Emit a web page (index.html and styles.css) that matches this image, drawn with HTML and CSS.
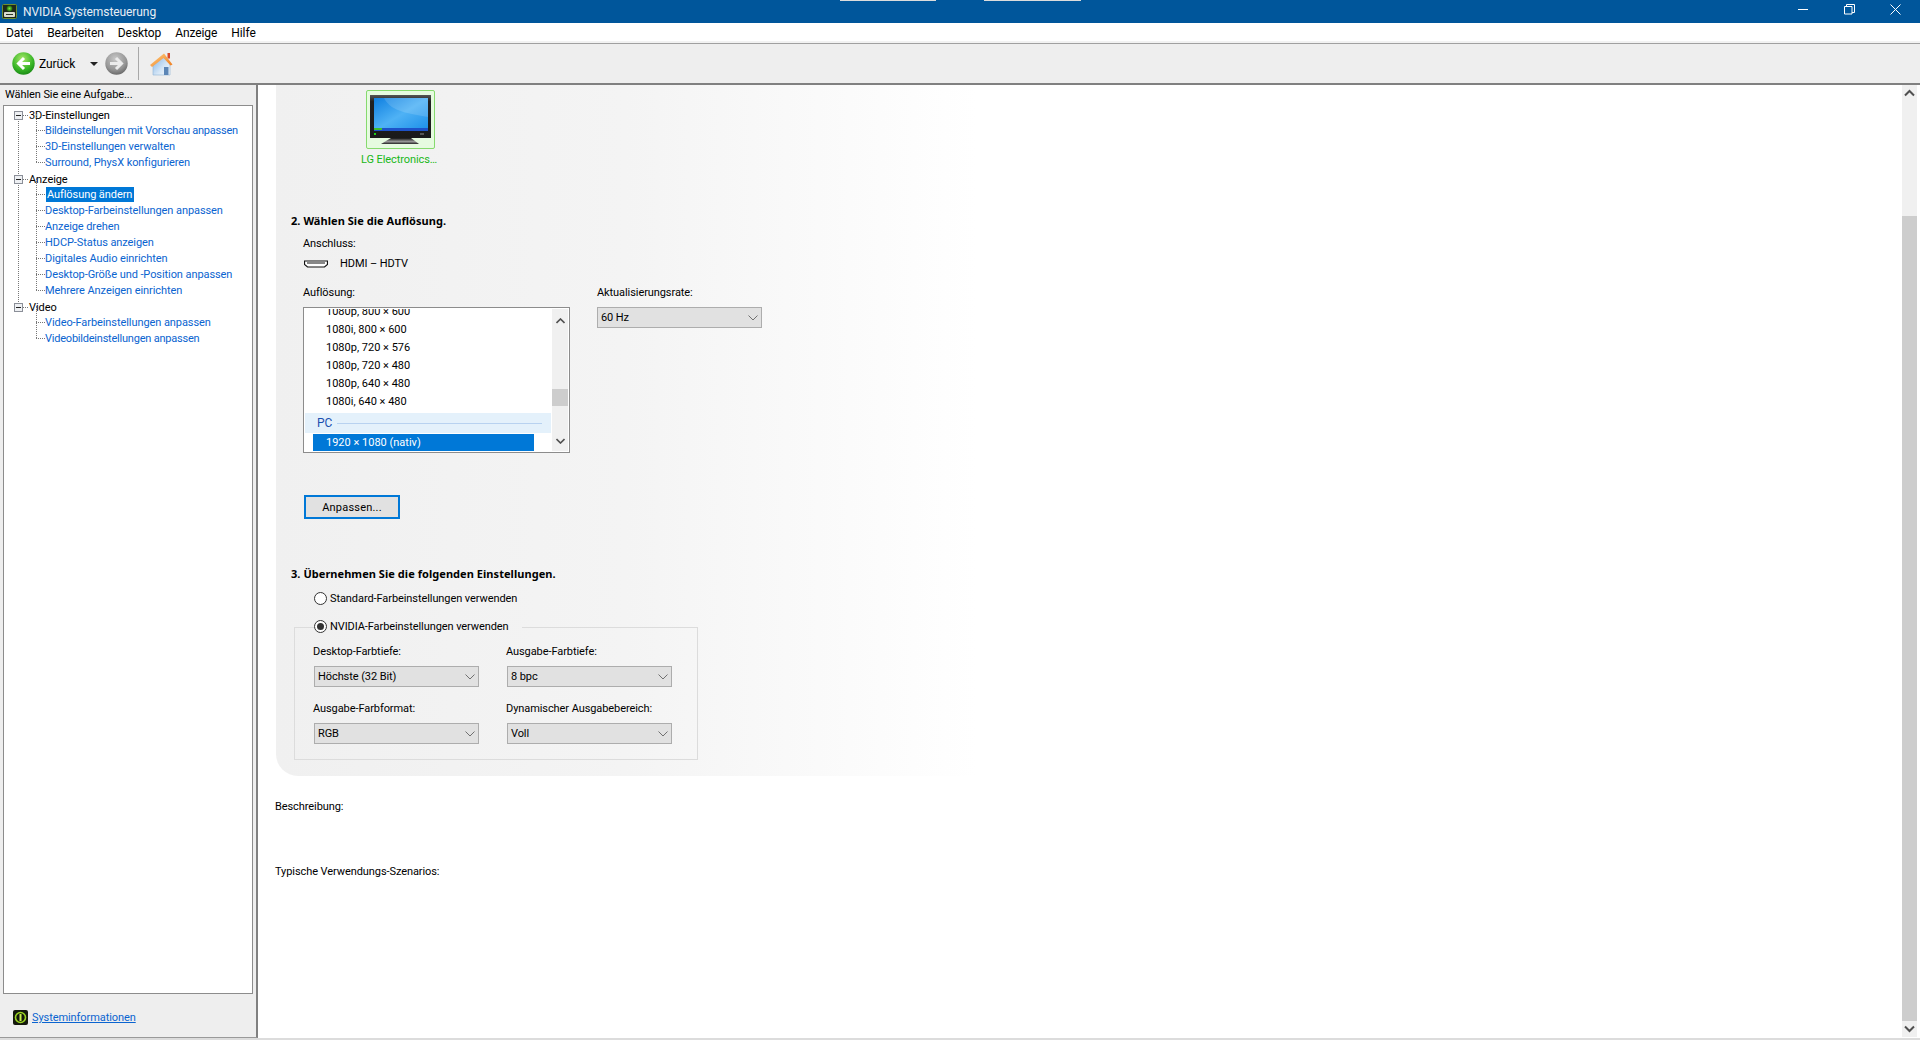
FILE: index.html
```html
<!DOCTYPE html>
<html lang="de">
<head>
<meta charset="utf-8">
<title>NVIDIA Systemsteuerung</title>
<link rel="stylesheet" href="styles.css">
</head>
<body>
<div class="window">
  <header class="titlebar">
    <svg class="app-icon" width="16" height="16" viewBox="0 0 16 16"><defs><radialGradient id="ag" cx=".5" cy=".5" r=".5"><stop offset="0" stop-color="#7cf03a"/><stop offset="1" stop-color="#1a5a10"/></radialGradient></defs><rect x="1.500" y="1.500" width="14" height="14" rx="1" fill="#20281a" stroke="#6f8f30"/><circle cx="8.500" cy="5.500" r="3" fill="url(#ag)"/><rect x="3" y="9" width="11" height="5" rx="1" fill="#d8dcd0"/><rect x="5" y="11" width="7" height="1" fill="#30382a"/></svg>
    <span class="title-text">NVIDIA Systemsteuerung</span>
    <div class="title-strips"><i class="strip strip-a"></i><i class="strip strip-b"></i></div>
    <div class="win-controls">
      <svg class="win-min" width="11" height="11" viewBox="0 0 11 11"><path d="M0 5.5H10" stroke="#fff" fill="none"/></svg>
      <svg class="win-max" width="11" height="11" viewBox="0 0 11 11"><path d="M.5 2.5h7.5v7.5H.5zM2.5 2.5V.5h8v8H8" stroke="#fff" fill="none"/></svg>
      <svg class="win-close" width="11" height="11" viewBox="0 0 11 11"><path d="M.5.5l10 10M10.500.5l-10 10" stroke="#fff" fill="none"/></svg>
    </div>
  </header>
  <nav class="menubar">
    <span class="menu-item">Datei</span><span class="menu-item">Bearbeiten</span><span class="menu-item">Desktop</span><span class="menu-item">Anzeige</span><span class="menu-item">Hilfe</span>
  </nav>
  <div class="toolbar">
    <svg class="tool-back" width="23" height="23" viewBox="0 0 23 23"><defs><radialGradient id="gb" cx=".45" cy=".3" r=".8"><stop offset="0" stop-color="#a8e86a"/><stop offset=".6" stop-color="#38b526"/><stop offset="1" stop-color="#0f7a10"/></radialGradient></defs><circle cx="11.500" cy="11.500" r="11.200" fill="url(#gb)"/><path d="M18 11.500H7M12 6l-5.500 5.500L12 17" fill="none" stroke="#fff" stroke-width="3"/></svg>
    <span class="back-label">Zurück</span>
    <i class="drop-caret"></i>
    <svg class="tool-forward" width="23" height="23" viewBox="0 0 23 23"><defs><radialGradient id="gf" cx=".45" cy=".3" r=".8"><stop offset="0" stop-color="#c8c8c8"/><stop offset=".6" stop-color="#969696"/><stop offset="1" stop-color="#585858"/></radialGradient></defs><circle cx="11.500" cy="11.500" r="11.200" fill="url(#gf)"/><path d="M5 11.500h11M11 6l5.500 5.500L11 17" fill="none" stroke="#ececec" stroke-width="3"/></svg>
    <i class="tool-sep"></i>
    <svg class="tool-home" width="25" height="24" viewBox="0 0 25 24"><defs><linearGradient id="hw" x1="0" y1="0" x2="1" y2="1"><stop offset="0" stop-color="#7fb2e6"/><stop offset=".6" stop-color="#d5e6f6"/><stop offset="1" stop-color="#f4f8fc"/></linearGradient><linearGradient id="hr" x1="0" y1="0" x2="1" y2="1"><stop offset="0" stop-color="#ffd083"/><stop offset="1" stop-color="#ee7a1c"/></linearGradient></defs><path d="M4 12L15 4l6 8v11H4z" fill="url(#hw)" stroke="#8fb4d4" stroke-width=".6"/><path d="M15 15h4.500v8H15z" fill="#5c86b6"/><path d="M18.500 1h2.500v5.500h-2.500z" fill="#d84a2a"/><path d="M1 13L15 1.500 23.500 12.500 21.500 13.500 14.500 6 3 15z" fill="url(#hr)"/></svg>
  </div>
  <div class="main">
    <aside class="sidebar">
      <div class="side-title">Wählen Sie eine Aufgabe...</div>
      <div class="tree">
        <ul class="tree-root">
          <li class="group">
            <div class="row parent"><i class="expander"></i>3D-Einstellungen</div>
            <ul class="children">
              <li class="row child tight">Bildeinstellungen mit Vorschau anpassen</li>
              <li class="row child">3D-Einstellungen verwalten</li>
              <li class="row child">Surround, PhysX konfigurieren</li>
            </ul>
          </li>
          <li class="group">
            <div class="row parent"><i class="expander"></i>Anzeige</div>
            <ul class="children">
              <li class="row child"><span class="selected-task">Auflösung ändern</span></li>
              <li class="row child">Desktop-Farbeinstellungen anpassen</li>
              <li class="row child">Anzeige drehen</li>
              <li class="row child">HDCP-Status anzeigen</li>
              <li class="row child">Digitales Audio einrichten</li>
              <li class="row child">Desktop-Größe und -Position anpassen</li>
              <li class="row child">Mehrere Anzeigen einrichten</li>
            </ul>
          </li>
          <li class="group last">
            <div class="row parent"><i class="expander"></i>Video</div>
            <ul class="children">
              <li class="row child">Video-Farbeinstellungen anpassen</li>
              <li class="row child tight">Videobildeinstellungen anpassen</li>
            </ul>
          </li>
        </ul>
      </div>
      <div class="side-foot">
        <svg width="15" height="15" viewBox="0 0 15 15"><rect width="15" height="15" rx="2" fill="#14180c"/><circle cx="7.500" cy="7.500" r="5" fill="none" stroke="#9ad422" stroke-width="1.600"/><path d="M7.500 4v7" stroke="#c8f04a" stroke-width="2"/></svg>
        <a class="sys-link">Systeminformationen</a>
      </div>
    </aside>
    <main class="content">
      <section class="panel">
        <div class="display-pick">
          <div class="tile">
            <svg width="61" height="50" viewBox="0 0 61 50"><defs><linearGradient id="scr" x1="0" y1="0" x2="1" y2="1"><stop offset="0" stop-color="#0f7fe0"/><stop offset=".5" stop-color="#4fb2f5"/><stop offset="1" stop-color="#1a8ee8"/></linearGradient><linearGradient id="st" x1="0" y1="0" x2="0" y2="1"><stop offset="0" stop-color="#111"/><stop offset=".6" stop-color="#999"/><stop offset="1" stop-color="#222"/></linearGradient><linearGradient id="fr" x1="0" y1="0" x2="0" y2="1"><stop offset="0" stop-color="#555"/><stop offset=".15" stop-color="#222"/><stop offset="1" stop-color="#1a1a1a"/></linearGradient></defs><rect x="0" y="0" width="61" height="43" fill="url(#fr)"/><rect x="4" y="3" width="54" height="33" fill="url(#scr)"/><path d="M14 3c6 12 20 15 44 19V3z" fill="#fff" opacity=".14"/><rect x="4" y="33" width="54" height="3" fill="#1d52c8"/><rect x="4" y="33" width="8" height="2" fill="#3fbf30"/><rect x="4" y="38" width="2" height="2" fill="#1fd018"/><rect x="50" y="38" width="4" height="2" fill="#555"/><path d="M21 43h20l8 6H11z" fill="url(#st)"/></svg>
          </div>
          <div class="tile-label">LG Electronics…</div>
        </div>

        <h2 class="heading h-res">2. Wählen Sie die Auflösung.</h2>
        <div class="indented">
          <div class="txt conn-label">Anschluss:</div>
          <div class="conn-row">
            <svg width="24" height="9" viewBox="0 0 24 9"><path d="M.500 1h23v3.500l-3 2.500H3.500l-3-2.500z" fill="#fff" stroke="#111" stroke-width="1.200"/><path d="M3 3h18" stroke="#111" stroke-width="1"/></svg>
            <span class="txt">HDMI – HDTV</span>
          </div>
          <div class="res-row">
            <div>
              <div class="txt">Auflösung:</div>
              <div class="listbox">
                <div class="list-body">
                  <div class="list-scroll">
                    <div class="opt">1080p, 800 × 600</div>
                    <div class="opt">1080i, 800 × 600</div>
                    <div class="opt">1080p, 720 × 576</div>
                    <div class="opt">1080p, 720 × 480</div>
                    <div class="opt">1080p, 640 × 480</div>
                    <div class="opt">1080i, 640 × 480</div>
                    <div class="opt-group"><span>PC</span><i></i></div>
                    <div class="opt active">1920 × 1080 (nativ)</div>
                  </div>
                </div>
                <div class="list-bar">
                  <svg width="9" height="6" viewBox="0 0 9 6"><path d="M.500 5L4.500 1l4 4" fill="none" stroke="#505050" stroke-width="1.600"/></svg>
                  <i class="list-thumb"></i>
                  <svg width="9" height="6" viewBox="0 0 9 6"><path d="M.500 1l4 4 4-4" fill="none" stroke="#505050" stroke-width="1.600"/></svg>
                </div>
              </div>
            </div>
            <div>
              <div class="txt">Aktualisierungsrate:</div>
              <div class="combo combo-first"><span>60 Hz</span><svg width="10" height="6" viewBox="0 0 10 6"><path d="M.500.500l4.500 4.500 4.500-4.500" fill="none" stroke="#707070"/></svg></div>
            </div>
          </div>
          <button class="btn" type="button">Anpassen...</button>
        </div>

        <h2 class="heading h-apply">3. Übernehmen Sie die folgenden Einstellungen.</h2>
        <div class="radio-row"><i class="radio"></i><span class="txt">Standard-Farbeinstellungen verwenden</span></div>
        <fieldset class="color-group">
          <legend class="radio-legend"><i class="radio on"></i><span class="txt">NVIDIA-Farbeinstellungen verwenden</span></legend>
          <div class="color-grid">
            <div>
              <div class="txt">Desktop-Farbtiefe:</div>
              <div class="combo"><span>Höchste (32 Bit)</span><svg width="10" height="6" viewBox="0 0 10 6"><path d="M.500.500l4.500 4.500 4.500-4.500" fill="none" stroke="#707070"/></svg></div>
            </div>
            <div>
              <div class="txt">Ausgabe-Farbtiefe:</div>
              <div class="combo"><span>8 bpc</span><svg width="10" height="6" viewBox="0 0 10 6"><path d="M.500.500l4.500 4.500 4.500-4.500" fill="none" stroke="#707070"/></svg></div>
            </div>
            <div>
              <div class="txt">Ausgabe-Farbformat:</div>
              <div class="combo"><span>RGB</span><svg width="10" height="6" viewBox="0 0 10 6"><path d="M.500.500l4.500 4.500 4.500-4.500" fill="none" stroke="#707070"/></svg></div>
            </div>
            <div>
              <div class="txt">Dynamischer Ausgabebereich:</div>
              <div class="combo"><span>Voll</span><svg width="10" height="6" viewBox="0 0 10 6"><path d="M.500.500l4.500 4.500 4.500-4.500" fill="none" stroke="#707070"/></svg></div>
            </div>
          </div>
        </fieldset>
      </section>
      <div class="txt desc">Beschreibung:</div>
      <div class="txt usage">Typische Verwendungs-Szenarios:</div>
    </main>
    <div class="vscroll">
      <div class="vs-btn"><svg width="11" height="8" viewBox="0 0 11 8"><path d="M1 6.500l4.500-4.500 4.500 4.500" fill="none" stroke="#505050" stroke-width="2"/></svg></div>
      <div class="vs-track"><i class="vs-thumb"></i></div>
      <div class="vs-btn"><svg width="11" height="8" viewBox="0 0 11 8"><path d="M1 1.500l4.500 4.500 4.500-4.500" fill="none" stroke="#505050" stroke-width="2"/></svg></div>
    </div>
  </div>
</div>
</body>
</html>
```

FILE: styles.css
```css
* { box-sizing: border-box; }
html, body { margin: 0; height: 100%; overflow: hidden; }
body { font-family: Roboto, "Liberation Sans", sans-serif; font-size: 11px; color: #000; background: #fff; white-space: nowrap; letter-spacing: -0.08px; }
ul { list-style: none; margin: 0; padding: 0; }
i { display: block; }

.window { display: flex; flex-direction: column; height: 1040px; }

.titlebar { height: 23px; background: #00569b; color: #e8eef5; display: flex; align-items: center; padding-left: 1px; font-size: 12px; flex: none; }
.app-icon { flex: none; margin-top: -2px; }
.title-text { margin-left: 6px; width: 817px; flex: none; }
.title-strips { display: flex; align-self: flex-start; flex: none; }
.strip { height: 1px; width: 96px; background: #dcdcdc; }
.strip-b { margin-left: 48px; width: 97px; }
.win-controls { margin-left: auto; display: flex; align-items: center; padding-right: 19px; margin-top: -4px; gap: 35px; }

.menubar { height: 20px; background: #fff; border-bottom: 2px solid #f2f2f2; display: flex; align-items: center; padding: 2px 0 0 6px; font-size: 12px; gap: 14px; flex: none; }

.toolbar { height: 42px; flex: none; background: #eeeeee; border-top: 1px solid #a0a0a0; display: flex; align-items: center; padding-left: 12px; border-bottom: 2px solid #808080; }
.back-label { margin-left: 4px; font-size: 12px; width: 46px; }
.drop-caret { width: 0; height: 0; border: 4px solid transparent; border-top-color: #222; border-bottom: 0; margin-left: 5px; }
.tool-forward { margin-left: 7px; }
.tool-sep { width: 1px; height: 33px; background: #a8a8a8; margin-left: 10px; }
.tool-home { margin-left: 10px; }

.main { flex: 1; display: flex; min-height: 0; border-bottom: 2px solid #dcdcdc; }

.sidebar { width: 258px; flex: none; background: #eeeeee; border-right: 2px solid #808080; border-bottom: 1px solid #999; display: flex; flex-direction: column; padding: 0 3px; }
.side-title { height: 20px; line-height: 20px; padding-left: 2px; }
.tree { flex: 1; background: #fff; border: 1px solid #8c8c8c; width: 250px; padding-top: 1px; padding-left: 9px; }
.row { height: 16px; line-height: 18px; white-space: nowrap; }
.group { position: relative; }
.group::before { content: ""; position: absolute; left: 5px; top: 8px; bottom: -8px; border-left: 1px dotted #777; }
.group.last::before { display: none; }
.parent { display: flex; align-items: center; position: relative; padding: 2px 0 0 16px; }
.parent::before { content: ""; position: absolute; left: 10px; top: 8px; width: 5px; border-top: 1px dotted #777; }
.expander { position: absolute; left: 1px; top: 4px; width: 9px; height: 9px; background: #eef0f3; border: 1px solid #8b8f98; z-index: 1; }
.expander::after { content: ""; display: block; margin: 3px 1px 0; height: 1px; background: #222; }
.children { margin: -1px 0 1px 23px; }
.child { color: #0a64d0; position: relative; padding-left: 9px; }
.child.tight { letter-spacing: -0.22px; }
.child::before { content: ""; position: absolute; left: 0; top: -8px; height: 16px; border-left: 1px dotted #777; }
.child::after { content: ""; position: absolute; left: 0; top: 8px; width: 9px; border-top: 1px dotted #777; }
.selected-task { background: #0078d7; color: #fff; display: inline-block; width: 88px; height: 15px; line-height: 15px; padding-left: 1px; margin: 1px 0 0 1px; vertical-align: top; }

.side-foot { height: 43px; display: flex; align-items: center; padding: 4px 0 0 10px; gap: 4px; }
.sys-link { color: #0a64d0; text-decoration: underline; }

.content { flex: 1; background: #fff; padding-left: 18px; min-width: 0; }
.panel { height: 691px; width: 700px; background: linear-gradient(90deg, #f0f0f0 0%, #f4f4f4 50%, #ffffff 100%); border-bottom-left-radius: 22px; padding: 5px 0 0 15px; }

.display-pick { width: 80px; margin-left: 69px; display: flex; flex-direction: column; align-items: center; }
.tile { width: 69px; height: 59px; background: #e6fbe0; border: 1px solid #86da6e; border-radius: 2px; padding: 4px 0 0 3px; flex: none; }
.tile svg { display: block; }
.tile-label { color: #18b818; line-height: 16px; margin: 3px 0 0 -2px; }

.txt { line-height: 16px; }
.heading { font-family: "Noto Sans", Roboto, sans-serif; font-size: 11px; font-weight: 700; line-height: 16px; margin: 0; letter-spacing: 0.05px; }
.h-res { margin-top: 45px; }
.h-apply { margin-top: 47px; }
.indented { padding-left: 12px; }
.conn-label { margin-top: 7px; }
.conn-row { display: flex; align-items: center; margin-top: 4px; gap: 12px; padding-left: 1px; height: 16px; }
.conn-row svg { flex: none; }
.res-row { display: flex; gap: 27px; margin-top: 13px; }
.listbox { width: 267px; height: 146px; margin-top: 6px; border: 1px solid #8c8c8c; background: #fff; display: flex; padding: 1px; }
.list-body { flex: 1; overflow: hidden; position: relative; }
.list-scroll { margin-top: -6px; }
.opt { height: 18px; line-height: 18px; padding-left: 21px; color: #000; letter-spacing: 0; }
.opt-group { height: 20px; background: #e4f1fb; margin-top: 2px; margin-bottom: 1px; display: flex; align-items: center; color: #1a50b0; font-size: 12px; padding-left: 12px; gap: 5px; }
.opt-group i { width: 205px; height: 1px; background: #b8d2f0; }
.opt.active { background: #0078d7; color: #fff; margin-left: 8px; width: 221px; padding-left: 13px; height: 17px; line-height: 17px; }
.list-bar { width: 16px; margin-left: 1px; background: #f0f0f0; display: flex; flex-direction: column; align-items: center; padding: 9px 0 7px; }
.list-thumb { width: 16px; height: 17px; background: #cdcdcd; margin-top: 65px; margin-bottom: auto; }
.combo { width: 165px; height: 21px; margin-top: 6px; background: #e1e1e1; border: 1px solid #adadad; display: flex; align-items: center; justify-content: space-between; padding: 0 3px 0 3px; }
.btn { display: block; width: 96px; height: 24px; margin: 42px 0 0 1px; background: #e1e1e1; border: 2px solid #0078d7; font: inherit; letter-spacing: 0.2px; color: #000; padding: 0; }

.radio-row { display: flex; align-items: center; margin: 9px 0 0 23px; gap: 3px; }
.radio { width: 13px; height: 13px; border: 1px solid #333; border-radius: 50%; background: #fff; flex: none; position: relative; margin-top: -2px; }
.radio.on::after { content: ""; position: absolute; left: 2px; top: 2px; width: 7px; height: 7px; border-radius: 50%; background: #333; }
.color-group { width: 404px; margin: 12px 0 0 3px; border: 1px solid #dcdcdc; padding: 9px 0 15px 19px; min-width: 0; }
.radio-legend { display: flex; align-items: center; gap: 3px; margin-left: 0; padding: 0 13px 0 0; height: 16px; }
.color-grid { display: grid; grid-template-columns: 165px 165px; column-gap: 28px; row-gap: 14px; }
.color-grid .txt { margin-left: -1px; }

.desc { margin: 23px 0 0 -1px; }
.usage { margin: 49px 0 0 -1px; }

.vscroll { width: 18px; flex: none; display: flex; flex-direction: column; padding: 0 3px 1px 0; background: #fff; }
.vs-btn { height: 16px; background: #f0f0f0; display: flex; align-items: center; justify-content: center; flex: none; }
.vs-track { flex: 1; background: #f0f0f0; padding-top: 115px; display: flex; }
.vs-thumb { flex: 1; background: #cdcdcd; }
```
